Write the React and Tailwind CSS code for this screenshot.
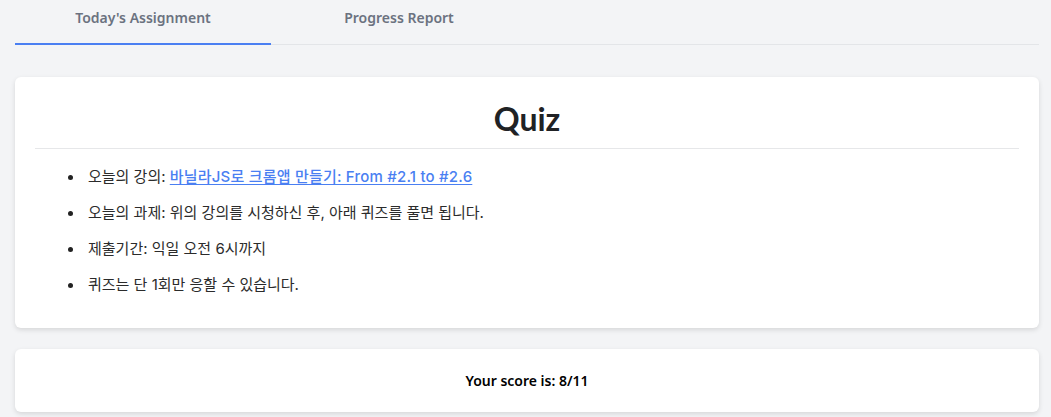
export default function App() {
  const items = [
    <>
      오늘의 강의:{" "}
      <a href="#" className="font-medium tracking-[0.2px] text-[#4a7ff2] underline underline-offset-2">
        바닐라JS로 크롬앱 만들기: From #2.1 to #2.6
      </a>
    </>,
    <>오늘의 과제: 위의 강의를 시청하신 후, 아래 퀴즈를 풀면 됩니다.</>,
    <>제출기간: 익일 오전 6시까지</>,
    <>퀴즈는 단 1회만 응할 수 있습니다.</>,
  ];
  return (
    <div className="min-h-[417px] w-full bg-[#f3f4f6] pl-[15px] pr-[12px] pb-4 font-['Noto_Sans',sans-serif]">
      <div className="flex border-b border-[#e3e5e8]">
        <div className="-mb-px w-[256px] border-b-2 border-[#4a7ff2] pb-[15px] pt-[8px] text-center text-[14px] font-semibold leading-5 text-[#6b7280]">
          Today's Assignment
        </div>
        <div className="-mb-px w-[256px] border-b-2 border-transparent pb-[15px] pt-[8px] text-center text-[14px] font-semibold leading-5 text-[#6b7280]">
          Progress Report
        </div>
      </div>
      <div className="mt-8 rounded-md bg-white pb-[25px] pt-[22px] shadow-[0_2px_5px_rgba(0,0,0,0.12)]">
        <h1 className="text-center font-['Lato',sans-serif] text-[32px] font-bold leading-10 text-[#202225]">
          Quiz
        </h1>
        <div className="mx-5 mt-[9px] border-t border-[#e6e7e9]" />
        <ul className="flex flex-col pl-[53px] pt-[10px] font-['Inter','Noto_Sans_CJK_KR',sans-serif] text-[15px] leading-9 text-[#2b2b2b]">
          {items.map((it, i) => (
            <li key={i} className="flex items-center">
              <span className="mr-[15px] h-[5px] w-[5px] shrink-0 rounded-full bg-[#222]" />
              <span>{it}</span>
            </li>
          ))}
        </ul>
      </div>
      <div className="mt-[21px] flex h-[63px] items-center justify-center rounded-md bg-white shadow-[0_2px_5px_rgba(0,0,0,0.12)]">
        <span className="text-[14px] font-semibold text-black">Your score is: 8/11</span>
      </div>
    </div>
  );
}
